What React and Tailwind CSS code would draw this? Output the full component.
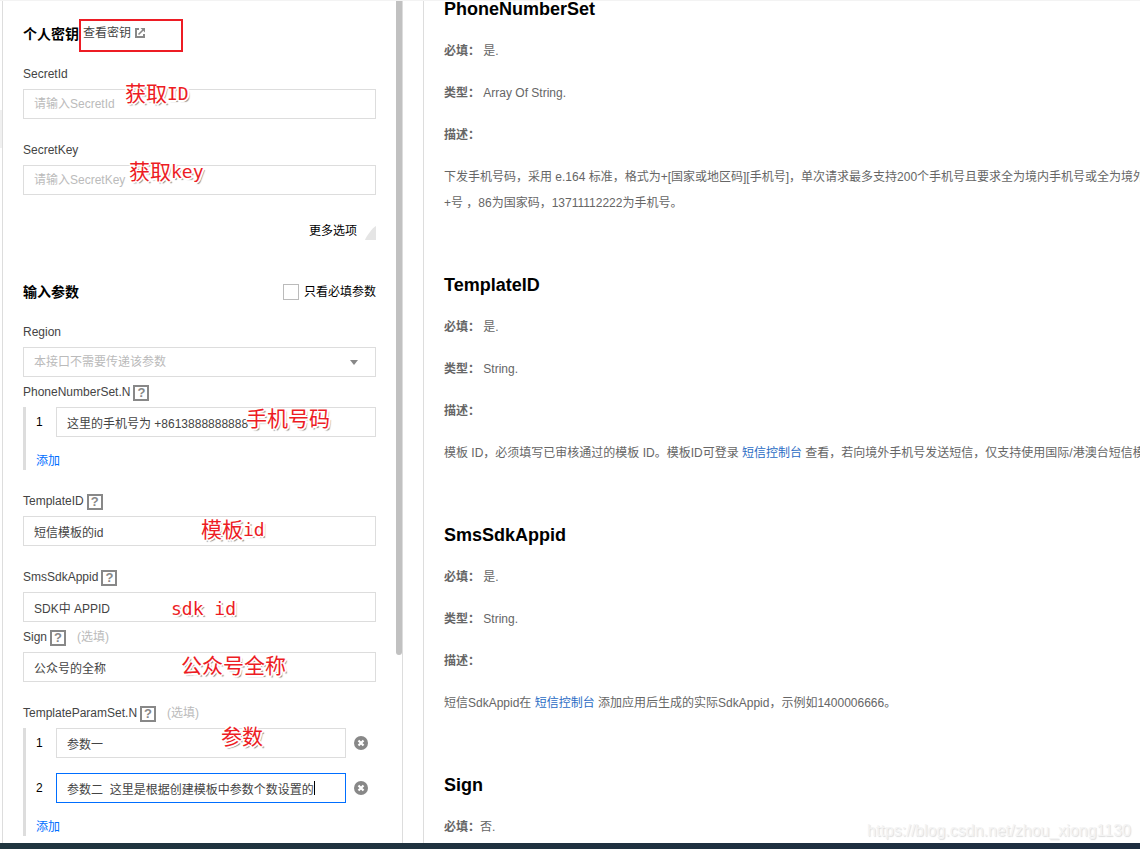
import React, { useState } from 'react';

const inputClass =
  'block w-full h-[30px] border border-[#ddd] bg-white px-[10px] text-xs text-[#444] placeholder:text-[#bbb] rounded-none outline-none focus:border-[#006eff]';

const HelpButton = ({ name }) => (
  <button
    type="button"
    aria-label={`${name} help`}
    className="mt-[2px] ml-[3px] flex h-4 w-4 items-center justify-center border-2 border-[#888] text-[13px] leading-3 font-bold text-[#888]"
  >
    ?
  </button>
);

const ExternalIcon = () => (
  <svg className="h-[10px] w-[10px]" viewBox="0 0 10 10" fill="none" stroke="#888">
    <path d="M4 1H1v8h8V6" strokeWidth="2" />
    <path d="M3.5 6.5L8 2" strokeWidth="1.6" />
    <path d="M5.5 0H10v4.5z" fill="#888" stroke="none" />
  </svg>
);

const RemoveIcon = () => (
  <svg className="h-[14px] w-[14px]" viewBox="0 0 14 14">
    <circle cx="7" cy="7" r="7" fill="#888" />
    <path d="M4.5 4.5l5 5M9.5 4.5l-5 5" stroke="#fff" strokeWidth="2.2" />
  </svg>
);

// Red note placed over a control
const Note = ({ className, text, latin }) => (
  <span
    className={`pointer-events-none absolute flex items-center h-6 whitespace-pre text-[21px] leading-6 text-[#ed1c24] [text-shadow:-1px_-1px_0_#fff,1px_-1px_0_#fff,-1px_1px_0_#fff,1px_1px_0_#fff,-2px_0_0_#fff,2px_0_0_#fff,0_2px_0_#fff,2px_2px_1px_#888] ${className}`}
  >
    {text}
    {latin && <span className="font-['DejaVu_Sans_Mono','Noto_Sans_CJK_SC',monospace] text-lg leading-6">{latin}</span>}
  </span>
);

const FieldLabel = ({ id, name, help, optional }) => (
  <div className="flex h-[30px] items-center">
    <label htmlFor={id} className="text-[#444]">{name}</label>
    {help && <HelpButton name={name} />}
    {optional && <span className="ml-[11px] text-[#bbb]">(选填)</span>}
  </div>
);

const TextField = ({ id, name, help, optional, placeholder, value, children }) => {
  const [text, setText] = useState(value || '');
  return (
    <div>
      <FieldLabel id={id} name={name} help={help} optional={optional} />
      <div className="relative">
        <input
          id={id}
          type="text"
          className={inputClass}
          placeholder={placeholder}
          value={text}
          onChange={(e) => setText(e.target.value)}
        />
        {children}
      </div>
    </div>
  );
};

const ListRow = ({ id, index, value, removable, active, children }) => (
  <div className="flex items-center">
    <label htmlFor={id} className="w-5 text-black">{index}</label>
    <div className="relative flex-1">
      <input
        id={id}
        type="text"
        defaultValue={value}
        className={active ? `${inputClass} border-[#006eff]!` : inputClass}
      />
      {children}
    </div>
    {removable && (
      <button type="button" aria-label="删除" className="mr-2 ml-2">
        <RemoveIcon />
      </button>
    )}
  </div>
);

const ListField = ({ children }) => (
  <div className="border-l-3 border-[#ddd] pl-[10px]">
    <div className="flex flex-col gap-[15px]">{children}</div>
    <button type="button" className="mt-[15px] block h-[18px] leading-[18px] text-[#006eff]">添加</button>
  </div>
);

const ParamForm = () => (
  <form className="min-w-0 flex-1 px-5 pt-[19px]">
    <div className="relative flex h-[30px] items-center">
      <h2 className="text-sm font-bold text-black">个人密钥</h2>
      <a href="#keys" className="mb-[2px] ml-1 flex items-center gap-1 text-[#444]">
        查看密钥
        <ExternalIcon />
      </a>
      <div className="pointer-events-none absolute top-0 left-[56px] h-[33px] w-[104px] border-2 border-[#ed1c24]" />
    </div>

    <div className="mt-[10px] flex flex-col gap-4">
      <TextField id="secretId" name="SecretId" placeholder="请输入SecretId">
        <Note className="-top-[7px] left-[102px]" text="获取" latin="ID" />
      </TextField>
      <TextField id="secretKey" name="SecretKey" placeholder="请输入SecretKey">
        <Note className="-top-[5px] left-[106px]" text="获取" latin="key" />
      </TextField>
    </div>

    <div className="mt-[21px] flex h-[30px] items-center justify-end">
      <button type="button" className="flex items-center gap-2 text-black">
        更多选项
        <svg className="mt-1 h-[14px] w-[11px]" viewBox="0 0 11 14">
          <path d="M11 0v14H0C1 11 7 2 11 0z" fill="#e5e5e5" />
        </svg>
      </button>
    </div>

    <div className="mt-[31px] flex h-[30px] items-center justify-between">
      <h2 className="text-sm font-bold text-black">输入参数</h2>
      <label className="flex items-center gap-[5px] text-black">
        <input type="checkbox" className="h-4 w-4 appearance-none border border-[#bbb] bg-white checked:bg-[#006eff]" />
        只看必填参数
      </label>
    </div>

    <div className="mt-[10px]">
      <FieldLabel id="region" name="Region" />
      <div className="relative">
        <select id="region" className="block h-[30px] w-full appearance-none rounded-none border border-[#ddd] bg-white px-[10px] text-xs text-[#bbb] outline-none">
          <option>本接口不需要传递该参数</option>
        </select>
        <svg className="pointer-events-none absolute top-[13px] right-[18px] h-[5px] w-2" viewBox="0 0 8 5">
          <path d="M0 0h8L4 5z" fill="#888" />
        </svg>
      </div>
    </div>

    <FieldLabel id="phone-1" name="PhoneNumberSet.N" help />
    <ListField>
      <ListRow id="phone-1" index={1} value="这里的手机号为 +8613888888888">
        <Note className="top-0 left-[190px]" text="手机号码" />
      </ListRow>
    </ListField>

    <div className="mt-4 mb-4">
      <TextField id="templateId" name="TemplateID" help value="短信模板的id">
        <Note className="top-[2px] left-[178px]" text="模板" latin="id" />
      </TextField>
    </div>
    <TextField id="sdkAppid" name="SmsSdkAppid" help value="SDK中 APPID">
      <Note className="top-[5px] left-[148px]" latin="sdk id" />
    </TextField>
    <TextField id="sign" name="Sign" help optional value="公众号的全称">
      <Note className="top-[2px] left-[158px]" text="公众号全称" />
    </TextField>

    <div className="mt-4">
      <FieldLabel id="param-1" name="TemplateParamSet.N" help optional />
      <ListField>
        <ListRow id="param-1" index={1} value="参数一" removable>
          <Note className="-top-[3px] left-[165px]" text="参数" />
        </ListRow>
        <ListRow id="param-2" index={2} value="参数二  这里是根据创建模板中参数个数设置的" removable active>
          <span className="absolute top-2 left-[258px] h-[14px] w-px bg-black" />
        </ListRow>
      </ListField>
    </div>
  </form>
);

const ConsoleLink = () => (
  <a href="#console" className="text-[#2b6cc4]">短信控制台</a>
);

const docs = [
  {
    name: 'PhoneNumberSet',
    required: ' 是.',
    type: ' Array Of String.',
    description: (
      <>
        下发手机号码，采用 e.164 标准，格式为+[国家或地区码][手机号]，单次请求最多支持200个手机号且要求全为境内手机号或全为境外
        <br />
        +号 ，86为国家码，13711112222为手机号。
      </>
    )
  },
  {
    name: 'TemplateID',
    required: ' 是.',
    type: ' String.',
    description: (
      <>
        模板 ID，必须填写已审核通过的模板 ID。模板ID可登录 <ConsoleLink /> 查看，若向境外手机号发送短信，仅支持使用国际/港澳台短信模
      </>
    )
  },
  {
    name: 'SmsSdkAppid',
    required: ' 是.',
    type: ' String.',
    description: (
      <>
        短信SdkAppid在 <ConsoleLink /> 添加应用后生成的实际SdkAppid，示例如1400006666。
      </>
    )
  },
  { name: 'Sign', required: '否.' }
];

const DocSection = ({ doc }) => (
  <section className="flex flex-col gap-4">
    <h3 className="text-lg leading-[26px] font-bold text-black">{doc.name}</h3>
    <p><strong>必填：</strong>{doc.required}</p>
    {doc.type && <p><strong>类型：</strong>{doc.type}</p>}
    {doc.description && (
      <>
        <p><strong>描述：</strong></p>
        <p className="whitespace-nowrap">{doc.description}</p>
      </>
    )}
  </section>
);

const App = () => (
  <div
    lang="zh-CN"
    className="relative flex h-screen flex-col overflow-hidden border-t border-[#f3f3f3] bg-white font-['Liberation_Sans','Noto_Sans_CJK_SC',sans-serif] text-xs"
  >
    <div className="-mt-px flex min-h-0 flex-1">
      <div className="w-[2px] shrink-0 pt-[110px]">
        <div className="h-[38px] bg-[#f0f0f0]" />
      </div>
      <aside className="flex w-[401px] shrink-0 overflow-hidden border-x border-[#ddd]">
        <ParamForm />
        <div className="w-[6px]">
          <div className="h-[655px] rounded-b-full bg-[#c1c1c1]" />
        </div>
      </aside>
      <main className="ml-5 min-w-0 flex-1 overflow-hidden border-l border-[#ddd] pl-5 leading-[26px] text-[#666]">
        <div className="-mt-1 flex flex-col gap-14">
          {docs.map((doc) => (
            <DocSection key={doc.name} doc={doc} />
          ))}
        </div>
      </main>
    </div>
    <footer className="h-[6px] shrink-0 bg-linear-to-r from-[#20353f] to-[#1e2d40]" />
    <span className="pointer-events-none absolute right-[9px] bottom-[6px] text-base leading-6 text-[#f4f4f4] [text-shadow:1px_1px_1px_#ddd]">
      https://blog.csdn.net/zhou_xiong1130
    </span>
  </div>
);

export default App;
